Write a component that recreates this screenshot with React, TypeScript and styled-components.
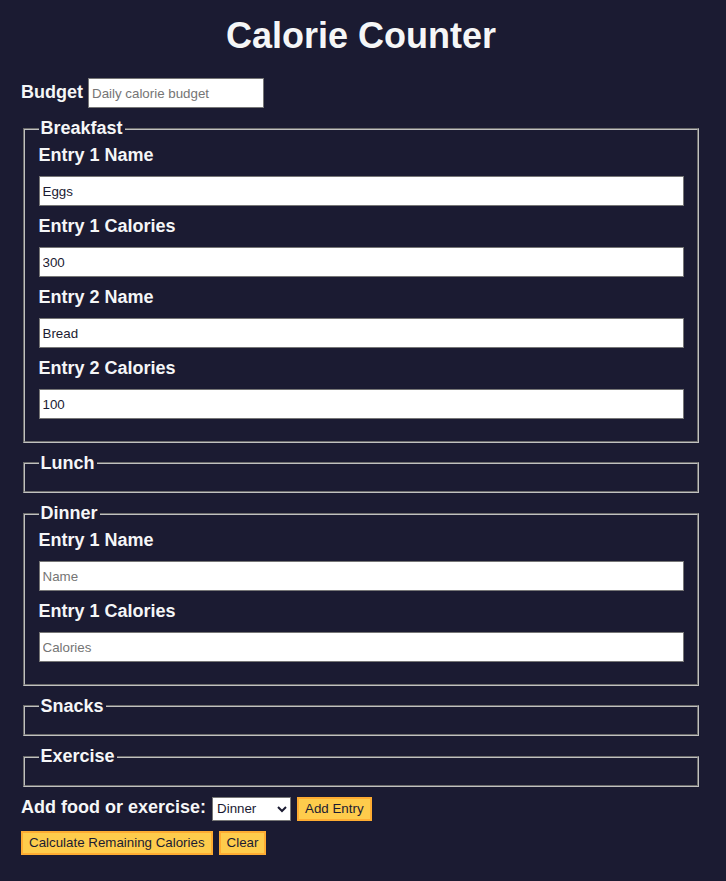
import React from "react";
import styled, { createGlobalStyle } from "styled-components";

const GlobalStyle = createGlobalStyle`
 body {
  margin: 0;
  background-color: #1b1b32;
  color: #f5f6f7;
  font-family: "Liberation Sans", Arial, Helvetica, sans-serif;
  font-size: 18px;
 }
`;

const Page = styled.main`
 width: 698px;
 padding: 0 12px;
`;

const Title = styled.h1`
 margin: 15px 0 22px;
 font-size: 36px;
 line-height: 41px;
 text-align: center;
`;

const Form = styled.form`
 width: 680px;
 margin: 0 auto;
`;

const Row = styled.div<{ $gap?: number }>`
 display: flex;
 align-items: baseline;
 gap: ${({ $gap }) => $gap ?? 6}px;
 margin-bottom: 10px;
`;

const Label = styled.label`
 font-weight: bold;
 line-height: 21px;
`;

const Field = styled.input<{ $width?: number }>`
 box-sizing: border-box;
 width: ${({ $width }) => ($width ? `${$width}px` : "auto")};
 height: 30px;
 margin: 0;
 padding: 1px 3px;
 border: 1px solid #767676;
 background: #fff;
 color: #1b1b32;
 font-family: "Liberation Sans", Arial, sans-serif;
 font-size: 13.333px;
 &::placeholder {
  color: #757575;
 }
`;

const Fieldset = styled.fieldset`
 margin: 0 2px 10px;
 padding: 6.3px 13.5px 11.25px;
 border: 2px groove rgb(192, 192, 192);
 min-width: 0;
`;

const Legend = styled.legend`
 padding: 0 2px;
 font-weight: bold;
 line-height: 21px;
`;

const InputContainer = styled.div`
 display: flex;
 flex-direction: column;

 ${Label} {
  margin-bottom: 10px;
 }

 ${Field} {
  width: 100%;
  margin-bottom: 10px;
 }
`;

const Select = styled.select`
 box-sizing: border-box;
 height: 24px;
 color: #1b1b32;
 background: #fff;
 font-family: "Liberation Sans", Arial, sans-serif;
 font-size: 13.333px;
`;

const Button = styled.button`
 box-sizing: border-box;
 height: 24px;
 padding: 1px 6px;
 background-color: #fecc4c;
 border: 2px solid #feac32;
 color: #1b1b32;
 font-family: "Liberation Sans", Arial, sans-serif;
 font-size: 13.333px;
 cursor: pointer;
`;

type Entry = { name?: string; calories?: string };

const meals: { title: string; entries: Entry[] }[] = [
 {
  title: "Breakfast",
  entries: [
   { name: "Eggs", calories: "300" },
   { name: "Bread", calories: "100" },
  ],
 },
 { title: "Lunch", entries: [] },
 { title: "Dinner", entries: [{}] },
 { title: "Snacks", entries: [] },
 { title: "Exercise", entries: [] },
];

const MealFieldset: React.FC<{ title: string; entries: Entry[] }> = ({ title, entries }) => {
 const id = title.toLowerCase();
 return (
  <Fieldset id={id}>
   <Legend>{title}</Legend>
   <InputContainer>
    {entries.map((entry, i) => (
     <React.Fragment key={i}>
      <Label htmlFor={`${id}-${i + 1}-name`}>Entry {i + 1} Name</Label>
      <Field id={`${id}-${i + 1}-name`} type="text" placeholder="Name" defaultValue={entry.name} />
      <Label htmlFor={`${id}-${i + 1}-calories`}>Entry {i + 1} Calories</Label>
      <Field
       id={`${id}-${i + 1}-calories`}
       type="text"
       inputMode="numeric"
       placeholder="Calories"
       defaultValue={entry.calories}
      />
     </React.Fragment>
    ))}
   </InputContainer>
  </Fieldset>
 );
};

export default function App() {
 return (
  <Page>
   <GlobalStyle />
   <Title>Calorie Counter</Title>
   <Form onSubmit={(e) => e.preventDefault()}>
    <Row $gap={5}>
     <Label htmlFor="budget">Budget</Label>
     <Field id="budget" $width={176} type="text" inputMode="numeric" placeholder="Daily calorie budget" />
    </Row>
    {meals.map((meal) => (
     <MealFieldset key={meal.title} title={meal.title} entries={meal.entries} />
    ))}
    <Row>
     <Label htmlFor="entry-dropdown">Add food or exercise:</Label>
     <Select id="entry-dropdown" defaultValue="dinner">
      <option value="breakfast">Breakfast</option>
      <option value="lunch">Lunch</option>
      <option value="dinner">Dinner</option>
      <option value="snacks">Snacks</option>
      <option value="exercise">Exercise</option>
     </Select>
     <Button type="button">Add Entry</Button>
    </Row>
    <Row>
     <Button type="submit">Calculate Remaining Calories</Button>
     <Button type="button">Clear</Button>
    </Row>
   </Form>
  </Page>
 );
}
